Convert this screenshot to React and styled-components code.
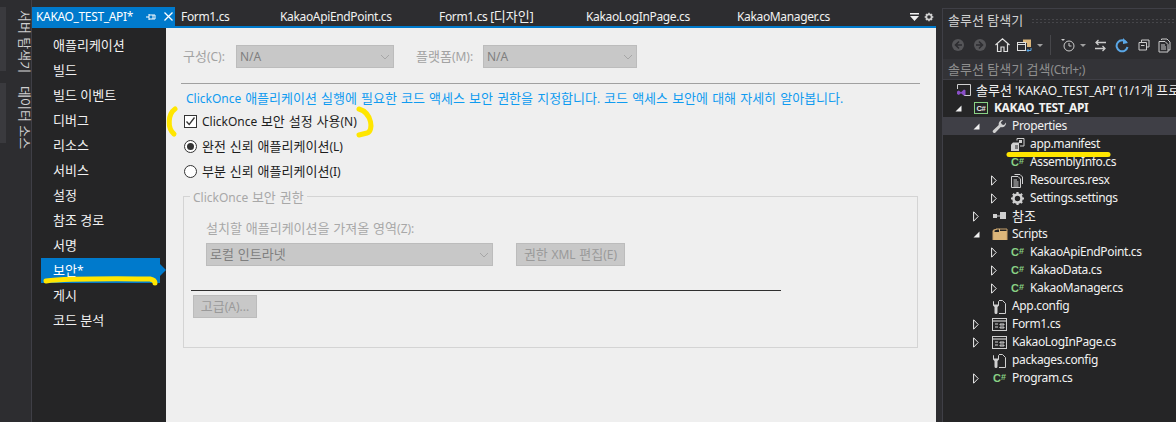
import React from 'react';
import styled, { createGlobalStyle } from 'styled-components';

const Global = createGlobalStyle`
  html, body { margin: 0; padding: 0; background: #2d2d30; overflow: hidden; }
  * { box-sizing: border-box; }
  #root { width: 1176px; height: 422px; }
`;
const FONT = `"Noto Sans", "Noto Sans CJK KR", sans-serif`;

const Page = styled.div`
  position: relative; display: flex; width: 1176px; height: 422px; overflow: hidden;
  background: #2d2d30; font: 12px/18px ${FONT}; color: #f1f1f1; letter-spacing: -0.35px;
`;
const Hangul = styled.span` font-size: 13px; letter-spacing: 0; `;
const ko = text => text.split(/([\uac00-\ud7a3]+(?: [\uac00-\ud7a3]+)*)/).map((part, i) =>
  i % 2 ? <Hangul key={i}>{part}</Hangul> : part);

const Rail = styled.div`
  width: 32px; flex: none; padding-top: 7px; border-right: 1px solid #3f3f46;
  display: flex; flex-direction: column; gap: 12px; background: #2d2d30;
`;
const RailTab = styled.div`
  height: ${p => p.$h}px; border-left: 6px solid #3a3a3e; padding: 3px 0 0 5px; color: #d0d0d0;
  writing-mode: vertical-rl; text-orientation: sideways; font-size: 13px; line-height: 13px;
  letter-spacing: 0; white-space: nowrap;
`;
const Center = styled.div`
  width: 904px; flex: none; display: flex; flex-direction: column;
`;
const TabBar = styled.div`
  height: 28px; flex: none; padding-top: 7px; display: flex; align-items: stretch;
  border-bottom: 2px solid #007acc;
`;
const ActiveTab = styled.div`
  width: 143px; background: #007acc; color: #fff; display: flex; align-items: center;
  padding-left: 4px; height: 19px; white-space: nowrap;
`;
const TabTitle = styled.span` width: 110px; flex: none; `;
const Tab = styled.div`
  width: ${p => p.$w}px; flex: none; padding-left: 6px; height: 19px; line-height: 19px;
  white-space: nowrap; color: #f1f1f1;
`;
const TabTools = styled.div`
  margin-left: auto; display: flex; gap: 5px; align-items: center; height: 19px; padding-right: 2px;
`;
const Body = styled.div` flex: 1; display: flex; min-height: 0; `;
const Nav = styled.div`
  width: 134px; flex: none; background: #252526; padding: 5px 6px 0 9px;
`;
const NavItem = styled.div`
  position: relative; height: 25px; line-height: 25px; padding-left: 12px; color: ${p => p.$sel ? '#fff' : '#f1f1f1'};
  background: ${p => p.$sel ? '#007acc' : 'transparent'}; width: 119px;
  ${p => p.$sel && `&::after { content: ''; position: absolute; left: 119px; top: 6px;
    border-left: 6px solid #007acc; border-top: 6px solid transparent; border-bottom: 6px solid transparent; }`}
`;
const Content = styled.div`
  flex: 1; background: #efefef; padding: 17px 16px 0 15px; color: #1e1e1e; position: relative;
  letter-spacing: 0; word-spacing: 0.5px;
`;
const ConfigRow = styled.div` display: flex; align-items: center; height: 23px; padding-left: 2px; `;
const DimLabel = styled.span`
  width: ${p => p.$w}px; padding-left: ${p => p.$pad || 0}px; color: #a2a2a2; flex: none; white-space: nowrap;
`;
const Select = styled.div`
  width: ${p => p.$w}px; height: 23px; flex: none; background: #c8c8c8; border: 1px solid #bcbcbc;
  color: #7f7f7f; display: flex; align-items: center; justify-content: space-between; padding: 0 3px 0 3px;
  white-space: nowrap;
`;
const Rule = styled.div` margin-top: 15px; width: 739px; height: 1px; background: #a0a0a0; `;
const LinkText = styled.div`
  margin: 5px 0 2px 5px; height: 18px; color: #0f9bf0; white-space: nowrap; word-spacing: 0.75px;
`;
const Option = styled.div`
  display: flex; align-items: center; height: 25px; padding-left: 3px; gap: 5px; white-space: nowrap;
`;
const CheckBox = styled.span`
  width: 13px; height: 13px; border: 1px solid #333; background: #fff; flex: none; display: flex;
  align-items: center; justify-content: center;
`;
const Radio = styled.span`
  width: 13px; height: 13px; border: 1px solid #333; border-radius: 50%; background: #fff; flex: none;
  display: flex; align-items: center; justify-content: center;
  &::after { content: ''; width: 7px; height: 7px; border-radius: 50%; background: ${p => p.$on ? '#333' : 'transparent'}; }
`;
const Group = styled.div`
  position: relative; margin: 12px 0 0 2px; width: 735px; height: 152px; border: 1px solid #d4d4d4;
  padding: 22px 0 0 22px;
`;
const Legend = styled.span`
  position: absolute; top: -9px; left: 6px; padding: 0 3px; background: #efefef; color: #a8a8a8;
  line-height: 18px; white-space: nowrap;
`;
const GroupLabel = styled.div` color: #a8a8a8; height: 18px; white-space: nowrap; `;
const GroupRow = styled.div` display: flex; gap: 23px; margin-top: 6px; `;
const FlatButton = styled.div`
  width: ${p => p.$w}px; height: 23px; background: #c8c8c8; border: 1px solid #bcbcbc; color: #9a9a9a;
  display: flex; align-items: center; justify-content: center; white-space: nowrap;
  margin: ${p => p.$m || 0};
`;
const DarkRule = styled.div` margin: 24px 0 0 -15px; width: 590px; height: 1px; background: #2f2f2f; `;
const Gutter = styled.div` width: 6px; flex: none; background: #2d2d30; `;
const Panel = styled.div`
  width: 234px; flex: none; margin-top: 8px; background: #252526; border-top: 1px solid #3f3f46;
  border-left: 1px solid #3f3f46; display: flex; flex-direction: column; overflow: hidden;
`;
const PanelHead = styled.div`
  height: 22px; flex: none; background: #2d2d30; display: flex; align-items: center; padding-left: 5px; gap: 8px;
  color: #d0d0d0; white-space: nowrap;
`;
const Grip = styled.div`
  flex: 1; height: 5px; background-image: radial-gradient(#46464a 0.7px, transparent 0.8px); background-size: 4px 3px;
`;
const Toolbar = styled.div`
  height: 28px; flex: none; background: #2d2d30; display: flex; align-items: center; padding-left: 4px;
`;
const ToolBtn = styled.span`
  width: ${p => p.$w || 22}px; flex: none; display: flex; align-items: center; justify-content: center;
`;
const ToolSep = styled.span` width: 1px; height: 20px; background: #46464a; margin: 0 7px 0 5px; flex: none; `;
const Search = styled.div`
  height: 21px; flex: none; background: #333337; color: #8f8f8f; padding-left: 5px; line-height: 21px;
  white-space: nowrap; border-bottom: 1px solid #3f3f46;
`;
const Tree = styled.div` padding-top: 1px; flex: 1; `;
const Row = styled.div`
  height: 18px; display: flex; align-items: center; padding-left: ${p => p.$d * 18}px; white-space: nowrap;
  background: ${p => p.$sel ? '#3f3f46' : 'transparent'}; color: #f1f1f1; font-weight: ${p => p.$bold ? 700 : 400};
  letter-spacing: ${p => p.$d === 0 ? '0' : 'inherit'};
`;
const ArrowCell = styled.span`
  margin-left: -7px; width: 20px; flex: none; display: flex; align-items: center; padding-left: 1px;
`;
const IconCell = styled.span` width: 20px; flex: none; display: flex; align-items: center; `;
const Overlay = styled.svg` position: absolute; left: 0; top: 0; pointer-events: none; `;

const g = '#d0d0d0';
const Open = () => <svg width="7" height="7" viewBox="0 0 7 7"><path d="M6.5 0.5V6.5H0.5Z" fill="#f1f1f1" /></svg>;
const Closed = () => <svg width="6" height="11" viewBox="0 0 6 11"><path d="M0.6 0.8L5.2 5.5L0.6 10.2Z" fill="none" stroke="#f1f1f1" /></svg>;
const Chevron = () => <svg width="10" height="6" viewBox="0 0 10 6"><path d="M1 1L5 5L9 1" fill="none" stroke="#a6a6a6" /></svg>;
const CS = ({ box }) => box
  ? <svg width="14" height="14" viewBox="0 0 14 14"><rect x="0.5" y="1.5" width="13" height="11" fill="#252526" stroke="#89d185" /><text x="7" y="10" fontSize="7.5" fontWeight="700" textAnchor="middle" fill="#e8e8e8" fontFamily="Liberation Sans">C#</text></svg>
  : <svg width="15" height="12" viewBox="0 0 15 12"><text x="1" y="10" fontSize="11" fontWeight="700" fill="#89d185" fontFamily="Liberation Sans">C</text><text x="9" y="7.5" fontSize="9" fontWeight="700" fill="#89d185" fontFamily="Liberation Sans">#</text></svg>;
const Solution = () => <svg width="16" height="14" viewBox="0 0 16 14"><path d="M1.5 6V1.5H14.5V12.5H8" fill="none" stroke={g} /><path d="M1 8.5L2.8 7.5L5 9.3L8 6.5L9.5 7.2V12L8 12.8L5 10.3L2.8 12L1 11Z" fill="#8a4fc7" /></svg>;
const Wrench = () => <svg width="15" height="15" viewBox="0 0 15 15"><path d="M14 3.5A4 4 0 0 1 8.8 8L3.5 13.5A1.5 1.5 0 0 1 1.2 11.3L6.8 6A4 4 0 0 1 11 1L8.8 3.4L10 5.6L12 6Z" fill={g} /></svg>;
const Manifest = () => <svg width="15" height="15" viewBox="0 0 15 15"><path d="M7 3.5V1.5H14V9H10" fill="none" stroke={g} /><rect x="9" y="3" width="3" height="3" fill={g} /><path d="M1 7.5L3 5.5H9V14H1Z" fill={g} /><path d="M5 9H8M5 11H8" stroke="#252526" /></svg>;
const Resx = () => <svg width="15" height="15" viewBox="0 0 15 15"><path d="M4.5 1.5H10L12.5 4V11" fill="none" stroke={g} /><path d="M1.5 3.5H8L10.5 6V14.5H1.5Z" fill="none" stroke={g} /><path d="M3.5 7H7M3.5 9H8.5M3.5 11H8.5M3.5 13H8.5" stroke={g} /></svg>;
const Gear = ({ s = 15 }) => <svg width={s} height={s} viewBox="0 0 15 15"><circle cx="7.5" cy="7.5" r="4" fill="none" stroke={g} strokeWidth="2.6" /><path d="M7.5 1V14M1 7.5H14M2.9 2.9L12.1 12.1M12.1 2.9L2.9 12.1" stroke={g} strokeWidth="2.2" strokeDasharray="2.4 8.2" /></svg>;
const Refs = () => <svg width="15" height="10" viewBox="0 0 15 10"><rect x="1" y="3" width="4" height="4" fill={g} /><path d="M5 5H8" stroke={g} /><rect x="8" y="1" width="6" height="7" fill={g} /></svg>;
const Folder = () => <svg width="16" height="14" viewBox="0 0 16 14"><path d="M1 13V3L5 1.5H8V4H15V13Z" fill="#dcb67a" /><path d="M2.5 5V3.5L5 2.5H7V5Z" fill="#252526" /><path d="M1 13V3.5L5 2M8 2H15V13" fill="none" stroke="#c9a26a" /></svg>;
const Config = () => <svg width="15" height="15" viewBox="0 0 15 15"><path d="M7 1.5H10.5L13.5 4.5V14.5H7" fill="none" stroke={g} /><path d="M2 2V5.5H6V2L7 2.5V6.5L5.5 8V13.5A1.5 1.5 0 0 1 2.5 13.5V8L1 6.5V2.5Z" fill={g} /></svg>;
const FormIcon = () => <svg width="15" height="13" viewBox="0 0 15 13"><rect x="0.5" y="0.5" width="14" height="12" fill="none" stroke={g} /><path d="M1 3H14" stroke={g} strokeWidth="1.2" /><path d="M3 6H6M8 6H12V7H8ZM3 9H6M8 9H12V10H8Z" stroke={g} /></svg>;
const Drop = () => <svg width="6" height="3" viewBox="0 0 6 3"><path d="M0 0H6L3 3Z" fill="#a0a0a0" /></svg>;

const nav = ['애플리케이션', '빌드', '빌드 이벤트', '디버그', '리소스', '서비스', '설정', '참조 경로', '서명', '보안*', '게시', '코드 분석'];
const tabs = [['Form1.cs', 99], ['KakaoApiEndPoint.cs', 159], ['Form1.cs [디자인]', 147], ['KakaoLogInPage.cs', 151], ['KakaoManager.cs', 130]];

const tree = [
  { d: 0, i: <Solution />, t: "솔루션 'KAKAO_TEST_API' (1/1개 프로젝트)" },
  { d: 1, a: 'o', i: <CS box />, t: 'KAKAO_TEST_API', bold: true },
  { d: 2, a: 'o', i: <Wrench />, t: 'Properties', sel: true },
  { d: 3, i: <Manifest />, t: 'app.manifest' },
  { d: 3, i: <CS />, t: 'AssemblyInfo.cs' },
  { d: 3, a: 'c', i: <Resx />, t: 'Resources.resx' },
  { d: 3, a: 'c', i: <Gear />, t: 'Settings.settings' },
  { d: 2, a: 'c', i: <Refs />, t: '참조' },
  { d: 2, a: 'o', i: <Folder />, t: 'Scripts' },
  { d: 3, a: 'c', i: <CS />, t: 'KakaoApiEndPoint.cs' },
  { d: 3, a: 'c', i: <CS />, t: 'KakaoData.cs' },
  { d: 3, a: 'c', i: <CS />, t: 'KakaoManager.cs' },
  { d: 2, i: <Config />, t: 'App.config' },
  { d: 2, a: 'c', i: <FormIcon />, t: 'Form1.cs' },
  { d: 2, a: 'c', i: <FormIcon />, t: 'KakaoLogInPage.cs' },
  { d: 2, i: <Config />, t: 'packages.config' },
  { d: 2, a: 'c', i: <CS />, t: 'Program.cs' },
];

export default function App() {
  return (
    <Page>
      <Global />
      <Rail>
        <RailTab $h={64}>서버 탐색기</RailTab>
        <RailTab $h={60}>데이터 소스</RailTab>
      </Rail>
      <Center>
        <TabBar>
          <ActiveTab>
            <TabTitle>KAKAO_TEST_API*</TabTitle>
            <svg width="10" height="10" viewBox="0 0 10 10" style={{ marginRight: 8 }}><path d="M0 5H3M3 2V8M3 3H9V7H3M7 3V7" fill="none" stroke="#fff" /></svg>
            <svg width="9" height="9" viewBox="0 0 9 9"><path d="M0.5 0.5L8.5 8.5M8.5 0.5L0.5 8.5" stroke="#fff" strokeWidth="1.3" /></svg>
          </ActiveTab>
          {tabs.map(([t, w]) => <Tab key={t} $w={w}>{ko(t)}</Tab>)}
          <TabTools>
            <svg width="9" height="8" viewBox="0 0 9 8"><path d="M0 0H9V1.5H0ZM0 3H9L4.5 8Z" fill="#f1f1f1" /></svg>
            <Gear s={10} />
          </TabTools>
        </TabBar>
        <Body>
          <Nav>
            {nav.map((n, i) => <NavItem key={n} $sel={i === 9}>{ko(n)}</NavItem>)}
          </Nav>
          <Content>
            <ConfigRow>
              <DimLabel $w={53}>{ko('구성(C):')}</DimLabel>
              <Select $w={158}>N/A<Chevron /></Select>
              <DimLabel $w={89} $pad={22}>{ko('플랫폼(M):')}</DimLabel>
              <Select $w={154}>N/A<Chevron /></Select>
            </ConfigRow>
            <Rule />
            <LinkText>{ko('ClickOnce 애플리케이션 실행에 필요한 코드 액세스 보안 권한을 지정합니다. 코드 액세스 보안에 대해 자세히 알아봅니다.')}</LinkText>
            <Option>
              <CheckBox><svg width="11" height="11" viewBox="0 0 11 11"><path d="M1.5 5.5L4.2 8.5L9.5 1.5" fill="none" stroke="#333" strokeWidth="1.3" /></svg></CheckBox>
              <span>{ko('ClickOnce 보안 설정 사용(N)')}</span>
            </Option>
            <Option><Radio $on /><span>{ko('완전 신뢰 애플리케이션(L)')}</span></Option>
            <Option><Radio /><span>{ko('부분 신뢰 애플리케이션(I)')}</span></Option>
            <Group>
              <Legend>{ko('ClickOnce 보안 권한')}</Legend>
              <GroupLabel>{ko('설치할 애플리케이션을 가져올 영역(Z):')}</GroupLabel>
              <GroupRow>
                <Select $w={287}><span>{ko('로컬 인트라넷')}</span><Chevron /></Select>
                <FlatButton $w={109}><span>{ko('권한 XML 편집(E)')}</span></FlatButton>
              </GroupRow>
              <DarkRule />
              <FlatButton $w={64} $m="4px 0 0 -13px"><span>{ko('고급(A)...')}</span></FlatButton>
            </Group>
          </Content>
        </Body>
      </Center>
      <Gutter />
      <Panel>
        <PanelHead><span>{ko('솔루션 탐색기')}</span><Grip /></PanelHead>
        <Toolbar>
          <ToolBtn><svg width="14" height="14" viewBox="0 0 14 14"><circle cx="7" cy="7" r="6" fill="#555558" /><path d="M8 3.5L4.5 7L8 10.5M4.5 7H11" fill="none" stroke="#2d2d30" strokeWidth="1.6" /></svg></ToolBtn>
          <ToolBtn><svg width="14" height="14" viewBox="0 0 14 14"><circle cx="7" cy="7" r="6" fill="#555558" /><path d="M6 3.5L9.5 7L6 10.5M9.5 7H3" fill="none" stroke="#2d2d30" strokeWidth="1.6" /></svg></ToolBtn>
          <ToolBtn><svg width="15" height="14" viewBox="0 0 15 14"><path d="M0.5 7L7.5 0.8L14.5 7M2.5 6V13.5H6V9H9V13.5H12.5V6" fill="none" stroke="#e0e0e0" strokeWidth="1.2" /></svg></ToolBtn>
          <ToolBtn><svg width="15" height="15" viewBox="0 0 15 15"><path d="M6 1.5H14V9H10V5H6Z" fill="#dcb67a" /><rect x="0.5" y="4.5" width="8" height="8" fill="#2d2d30" stroke="#e0e0e0" /><path d="M0.5 6.5H8.5" stroke="#e0e0e0" /><path d="M14 10V12.5H10M11.5 11L10 12.5L11.5 14" fill="none" stroke="#5aa7e6" /></svg></ToolBtn>
          <ToolBtn $w={10}><Drop /></ToolBtn>
          <ToolSep />
          <ToolBtn $w={20}><svg width="14" height="14" viewBox="0 0 14 14"><path d="M0 1H4L2 3Z" fill="#ccc" /><circle cx="8" cy="8" r="5" fill="none" stroke="#ccc" /><path d="M8 5V8H10.5" fill="none" stroke="#ccc" /></svg></ToolBtn>
          <ToolBtn $w={10}><Drop /></ToolBtn>
          <ToolBtn $w={24}><svg width="13" height="13" viewBox="0 0 13 13"><path d="M12 3.5H2M4.5 1L2 3.5L4.5 6M1 9.5H11M8.5 7L11 9.5L8.5 12" fill="none" stroke="#ccc" strokeWidth="1.3" /></svg></ToolBtn>
          <ToolBtn $w={20}><svg width="14" height="15" viewBox="0 0 14 15"><path d="M11.5 4.5A5.5 5.5 0 1 0 12.5 9" fill="none" stroke="#5aa7e6" strokeWidth="2" /><path d="M8 0L8 6L13 5Z" fill="#5aa7e6" /></svg></ToolBtn>
          <ToolBtn $w={23}><svg width="12" height="12" viewBox="0 0 12 12"><path d="M3.5 3V1H11V8H9M1 3.5H8.5V11H1ZM3 6.5H6.5" fill="none" stroke="#ccc" /></svg></ToolBtn>
          <ToolBtn $w={19}><svg width="13" height="15" viewBox="0 0 13 15"><path d="M3.5 2V1H9L12 4V12H10M1 3.5H7L10 6.5V14H1ZM3 7H7M3 9H8M3 11H8" fill="none" stroke="#ccc" /></svg></ToolBtn>
        </Toolbar>
        <Search>{ko('솔루션 탐색기 검색(Ctrl+;)')}</Search>
        <Tree>
          {tree.map(r => (
            <Row key={r.t} $d={r.d} $sel={r.sel} $bold={r.bold}>
              <ArrowCell>{r.a === 'o' ? <Open /> : r.a === 'c' ? <Closed /> : null}</ArrowCell>
              <IconCell>{r.i}</IconCell>
              <span>{ko(r.t)}</span>
            </Row>
          ))}
        </Tree>
      </Panel>
      <Overlay width="1176" height="422" viewBox="0 0 1176 422">
        <g fill="none" stroke="#ffe600" strokeWidth="5" strokeLinecap="round">
          <path d="M175 109C168 114 167 128 174 134" />
          <path d="M359 109C372 113 374 131 367 133L359 135" />
          <path d="M46 281C70 278 130 279 150 279Q155 280 155 283" />
          <path d="M1009 154.5H1108" />
        </g>
      </Overlay>
    </Page>
  );
}
